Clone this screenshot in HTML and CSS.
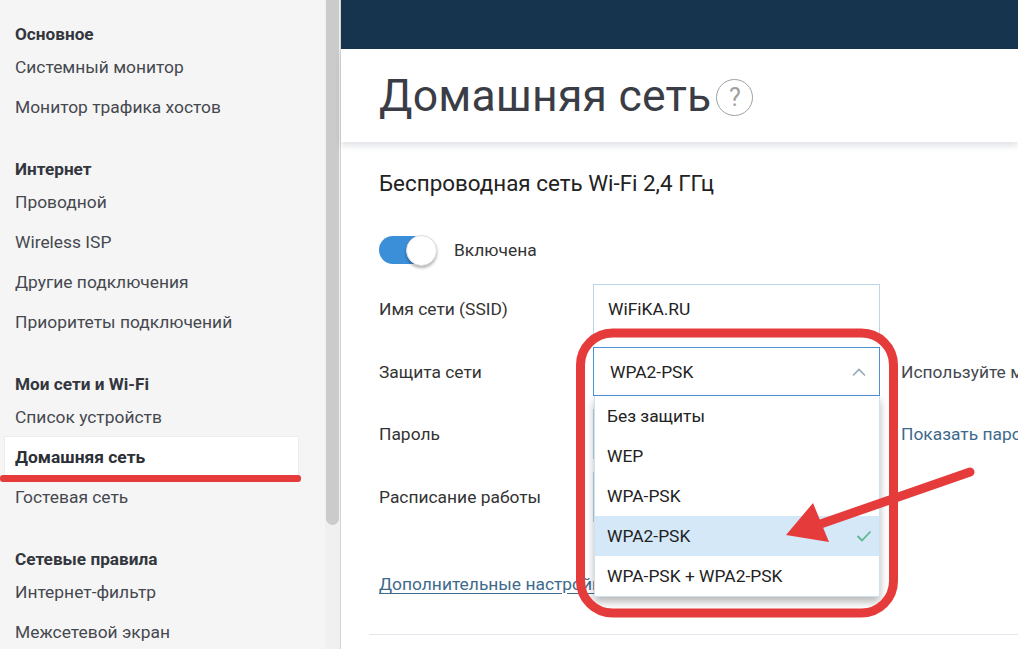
FILE: index.html
```html
<!DOCTYPE html>
<html lang="ru">
<head>
    <meta charset="UTF-8">
    <meta name="viewport" content="width=device-width, initial-scale=1.0">
    <title>Домашняя сеть</title>
    <link rel="stylesheet" href="styles.css">
</head>
<body>
    <div class="layout">
        <aside class="sidebar">
            <nav class="menu">
                <div class="group">
                    <div class="group-title">Основное</div>
                    <a class="item">Системный монитор</a>
                    <a class="item">Монитор трафика хостов</a>
                </div>
                <div class="group">
                    <div class="group-title">Интернет</div>
                    <a class="item">Проводной</a>
                    <a class="item">Wireless ISP</a>
                    <a class="item">Другие подключения</a>
                    <a class="item">Приоритеты подключений</a>
                </div>
                <div class="group">
                    <div class="group-title">Мои сети и Wi-Fi</div>
                    <a class="item">Список устройств</a>
                    <a class="item active">Домашняя сеть</a>
                    <a class="item">Гостевая сеть</a>
                </div>
                <div class="group">
                    <div class="group-title">Сетевые правила</div>
                    <a class="item">Интернет-фильтр</a>
                    <a class="item">Межсетевой экран</a>
                </div>
            </nav>
            <div class="scrollbar"><div class="thumb"></div></div>
        </aside>

        <main class="main">
            <div class="topbar"></div>
            <header class="page-head">
                <h1>Домашняя сеть</h1>
                <span class="help">?</span>
            </header>

            <section class="card">
                <h2>Беспроводная сеть Wi-Fi 2,4 ГГц</h2>

                <div class="switch-row">
                    <span class="switch"><span class="knob"></span></span>
                    <span>Включена</span>
                </div>

                <div class="row">
                    <label>Имя сети (SSID)</label>
                    <div class="field">WiFiKA.RU</div>
                </div>

                <div class="row">
                    <label>Защита сети</label>
                    <div class="select-wrap">
                        <div class="field select">
                            <span>WPA2-PSK</span>
                            <svg class="chevron" width="16" height="10" viewBox="0 0 16 10">
                                <polyline points="2,8.5 8,2.5 14,8.5" fill="none" stroke="#94aabb" stroke-width="1.6"/>
                            </svg>
                        </div>
                        <ul class="options">
                            <li>Без защиты</li>
                            <li>WEP</li>
                            <li>WPA-PSK</li>
                            <li class="selected">WPA2-PSK
                                <svg width="16" height="12" viewBox="0 0 16 12">
                                    <polyline points="1.5,6 6,10.5 14.5,1.5" fill="none" stroke="#5cb98c" stroke-width="1.8"/>
                                </svg>
                            </li>
                            <li>WPA-PSK + WPA2-PSK</li>
                        </ul>
                    </div>
                    <span class="hint">Используйте м</span>
                </div>

                <div class="row">
                    <label>Пароль</label>
                    <div class="field"></div>
                    <a class="hint link">Показать паро</a>
                </div>

                <div class="row">
                    <label>Расписание работы</label>
                    <div class="field"></div>
                </div>

                <a class="more">Дополнительные настройки</a>
                <div class="divider"></div>
            </section>
        </main>
    </div>

    <!-- пометки поверх скриншота -->
    <svg class="marks" width="1018" height="649" viewBox="0 0 1018 649">
        <rect x="0" y="475" width="301" height="7" rx="3" fill="#e63b3b"/>
        <rect x="580.5" y="333" width="313" height="280" rx="32" fill="none" stroke="#e63b3b" stroke-width="9"/>
        <line x1="970" y1="472" x2="812" y2="527" stroke="#e63b3b" stroke-width="9" stroke-linecap="round"/>
        <polygon points="786,535 813,503 829,542" fill="#e63b3b"/>
    </svg>
</body>
</html>
```

FILE: styles.css
```css
body {
    margin: 0;
    font-family: Roboto, "Noto Sans", sans-serif;
    color: #333;
    overflow: hidden;
    position: relative;
}
.layout {
    display: flex;
    height: 649px;
}
.sidebar {
    display: flex;
    width: 340px;
    flex-shrink: 0;
    background: #f5f5f5;
}
.menu {
    width: 325px;
    padding-top: 24px;
}
.group {
    display: flex;
    flex-direction: column;
    margin-bottom: 32px;
}
.group-title {
    font-size: 17.2px;
    font-weight: bold;
    line-height: 20px;
    margin: 0 0 3px 15px;
    color: #33363d;
}
.item {
    height: 40px;
    line-height: 40px;
    margin-left: 5px;
    width: 283px;
    padding-left: 10px;
    font-size: 17.4px;
    color: #45484f;
    white-space: nowrap;
}
.item.active {
    background: #fff;
    font-weight: bold;
    color: #2c2f36;
    box-shadow: 0 0 0 1px #ececec;
}
.scrollbar {
    width: 15px;
    background: #f0f0f0;
    display: flex;
    justify-content: center;
}
.thumb {
    width: 13px;
    height: 525px;
    background: #cbcbcb;
    border-radius: 0 0 7px 7px;
}
.main {
    flex: 1;
    border-left: 1px solid #d4d4d4;
    background: #fff;
    min-width: 0;
}
.topbar {
    height: 49px;
    background: #17344e;
}
.page-head {
    height: 93px;
    display: flex;
    align-items: center;
    padding-left: 38px;
    box-shadow: 0 4px 6px rgba(40, 60, 90, 0.14);
    position: relative;
}
.page-head h1 {
    margin: 0;
    font-size: 44.5px;
    font-weight: normal;
    color: #3a3d45;
    letter-spacing: 0.2px;
}
.help {
    width: 35px;
    height: 35px;
    border: 1.5px solid #a0a0a0;
    border-radius: 50%;
    color: #a0a0a0;
    font-size: 25px;
    display: flex;
    align-items: center;
    justify-content: center;
    margin: 4px 0 0 5px;
}
.card {
    padding: 29px 0 0 38px;
    white-space: nowrap;
}
.card h2 {
    margin: 0;
    font-size: 22.4px;
    font-weight: normal;
    line-height: 24px;
    color: #222;
}
.switch-row {
    display: flex;
    align-items: center;
    height: 34px;
    margin: 38px 0 17px;
    font-size: 17.4px;
    color: #333;
}
.switch {
    position: relative;
    width: 56px;
    height: 28px;
    border-radius: 14px;
    background: #3b8fd8;
    margin-right: 19px;
}
.knob {
    position: absolute;
    right: -2px;
    top: -1px;
    width: 29px;
    height: 29px;
    border-radius: 50%;
    background: #fff;
    border: 1px solid #ddd;
    box-shadow: 0 2px 3px rgba(0, 0, 0, 0.3);
}
.row {
    display: flex;
    align-items: center;
    height: 50px;
    margin-bottom: 12.5px;
    font-size: 17.4px;
}
.row label {
    flex: 0 0 214px;
    color: #333;
}
.field {
    box-sizing: border-box;
    flex-shrink: 0;
    width: 287px;
    height: 50px;
    border: 1px solid #bcd6ec;
    padding-left: 14px;
    display: flex;
    align-items: center;
    color: #222;
}
.select-wrap {
    position: relative;
    flex-shrink: 0;
}
.select {
    height: 49px;
    border: 1.5px solid #4a92d4;
    padding: 0 12px 0 16px;
    justify-content: space-between;
}
.options {
    position: absolute;
    top: 100%;
    left: 1px;
    right: 0;
    margin: 0;
    padding: 0;
    list-style: none;
    background: #fff;
    border: 1px solid #cfe0ee;
    border-top: none;
    box-shadow: 0 5px 8px rgba(0, 0, 0, 0.28);
    z-index: 2;
}
.options li {
    height: 40px;
    padding: 0 7px 0 12px;
    display: flex;
    align-items: center;
    justify-content: space-between;
    color: #222;
}
.options li.selected {
    background: #d5e8f8;
}
.hint {
    margin-left: 21px;
    color: #45484f;
}
.link {
    color: #3e6a8c;
}
.more {
    display: inline-block;
    margin-top: 40px;
    font-size: 17.4px;
    line-height: 20px;
    color: #3e6a8c;
    text-decoration: underline;
    text-underline-offset: 3px;
}
.divider {
    height: 1px;
    background: #e3e8ee;
    margin: 40px 0 0 -10px;
}
.marks {
    position: absolute;
    left: 0;
    top: 0;
    z-index: 5;
    pointer-events: none;
}
```
